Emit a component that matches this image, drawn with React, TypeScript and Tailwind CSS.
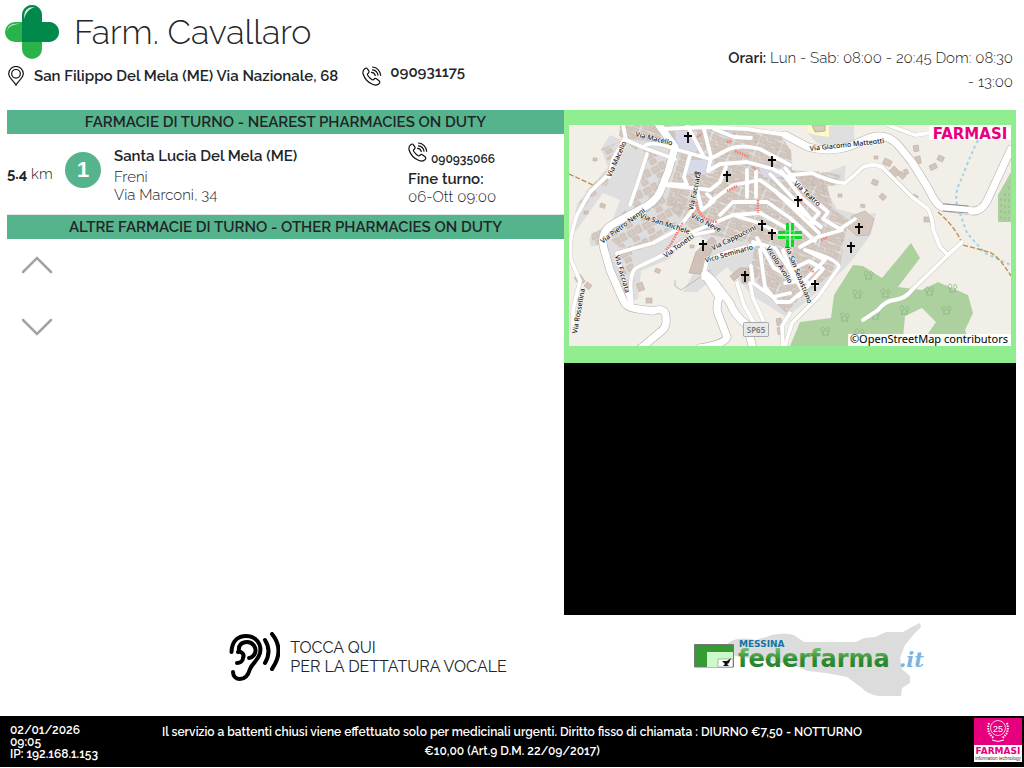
import type { ReactNode } from "react";

function PharmacyCross() {
  return (
    <svg viewBox="0 0 54 54" className="size-[54px] shrink-0" aria-hidden="true">
      <rect x="17" y="0" width="20" height="54" rx="10" fill="#2ab34b" />
      <rect x="0" y="17" width="54" height="20" rx="10" fill="#2ab34b" />
      <path d="M17 37V10a10 10 0 0 1 20 0v7h7a10 10 0 0 1 0 20z" fill="#00894a" />
      <path d="M19 14c0-9 3-12 11-12-6 2-9 5-11 12z" fill="#fff" opacity=".85" />
      <path d="M2 26c1-5 4-8 13-7-7 0-11 2-13 7z" fill="#fff" opacity=".85" />
    </svg>
  );
}

function PinIcon() {
  return (
    <svg viewBox="0 0 16 20" className="h-5 w-4 shrink-0" fill="none" stroke="#111" strokeWidth="1.2" aria-hidden="true">
      <path d="M8 19C6 15 .7 12 .7 7.800a7.300 7.300 0 0 1 14.600 0C15.300 12 10 15 8 19z" />
      <circle cx="8" cy="7.800" r="4.300" />
    </svg>
  );
}

function PhoneIcon() {
  return (
    <svg viewBox="0 0 20 20" className="size-5 shrink-0" fill="none" stroke="#111" strokeWidth="1.200" strokeLinecap="round" strokeLinejoin="round" aria-hidden="true">
      <path d="M3 2.500C1 4 .5 6 1.200 8.300c1.500 4.500 5 8.500 9.800 10.200 2.500.9 4.800.6 6.300-1.200.7-.9.500-2-.3-2.600l-2.600-1.900c-.8-.5-1.700-.4-2.300.3-.7.900-1.400 1-2.400.4-1.500-1-3-2.500-4-4.200-.5-.9-.3-1.500.5-2.100.9-.6 1.100-1.500.6-2.400L5.300 2.600C4.800 1.800 3.800 1.800 3 2.500z" />
      <path d="M10.500 1c4.400.3 7.800 3.800 8.200 8.300M10.500 3.900c2.800.3 5 2.400 5.500 5.300M9.500 6.300c2 .2 3.300 1.400 3.800 3.200" />
    </svg>
  );
}

function EarIcon() {
  return (
    <svg viewBox="0 0 51 50" className="h-[50px] w-[51px] shrink-0" fill="none" stroke="#000" strokeWidth="4" strokeLinecap="round" aria-hidden="true">
      <path d="M2.500 20C3 8 10 4 17 4c10 0 16 8 14 17-2 8-7 9-10 16-2 7-5 10-10 10-4 0-7-3-7-7" />
      <path d="M10 19c-1-6 3-9 8-9 6 0 10 6 8 11-1 3-4 5-6 5" />
      <path d="M9 20c3-1 7 2 5 6 0 3-3 5-6 5" />
      <path d="M36 8q7 11 0 23M43 2q13 16 0 35" />
    </svg>
  );
}

const casedRoads = [
  "M216 10 239 22 Q259 28 279 22L300 13Q317 7 329 20L343 37 359 63Q367 80 373 82L403 86Q412 87 418 76L442 24",
  "M90 0 106 22 99 47 91 67Q86 78 70 85L46 98Q30 106 35 124L41 145 54 175Q57 183 69 184L84 186Q98 181 97 195 98 203 90 208L72 223",
  "M136 149Q143 153 151 165L161 178Q165 190 178 200L184 224",
  "M138 153 150 172Q146 184 150 191L158 212Q156 219 131 223",
];

const streets = [
  "M54 0 57 15 78 24 106 34",
  "M41 48 21 67 8 90Q-2 120 2 135L11 156 4 185 4 207",
  "M56 13 44 34 40 52",
  "M78 29 70 54 61 80",
  "M74 22Q80 16 97 21L106 24 141 34 160 24Q172 19 191 24L221 40",
  "M134 0 142 32 139 46",
  "M118 0 134 30",
  "M139 46 151 39 178 37 204 44 226 56",
  "M121 30 115 52 118 60 97 59 M95 60 124 63 141 65 151 57 157 42",
  "M94 4 138 2 178 4 218 10",
  "M145 4 165 12 182 13",
  "M128 65 133 85 145 76 138 69",
  "M223 50 243 48Q265 58 276 58 286 50 294 42 304 38 313 42L343 72 359 84Q364 94 364 104L371 122 379 130",
  "M393 117 379 130 343 165Q336 174 325 175 316 176 309 185L294 195",
  "M319 0 346 10 360 8",
  "M63 180Q61 160 62 155C63 147 65 143 71 141L94 130 124 110 144 106",
  "M48 128 84 118 108 105 125 83 M48 128 54 155 63 183",
  "M134 153 138 135 158 127 188 119",
  "M168 158 175 180 186 200 M181 158 184 173 194 195",
  "M141 77 164 60 191 55 221 77 252 102",
  "M151 90 164 77 198 77 221 93 246 116",
  "M164 90 191 88 225 107",
  "M121 108 145 98 164 90 190 98 210 108",
  "M178 45 178 72 M187 46 187 72",
  "M216 43 236 67 259 87 254 94 271 104 286 94",
  "M212 46 232 72 250 88 242 97",
  "M201 49 226 75 245 98",
  "M205 65 225 84 250 108",
  "M184 117 206 123 217 139 232 163",
  "M188 113 205 143 221 152 248 160",
  "M191 125 196 162 208 177 221 177 234 166",
  "M182 141 184 158 204 172 221 168",
  "M214 125 221 143 236 165",
  "M231 122 249 112 273 105",
  "M236 125Q269 134 270 142L249 172 223 198 216 221",
  "M216 158 236 155 256 135 239 126",
  "M221 145 240 136 254 144 230 171",
  "M221 188 213 201 214 221",
];

const churches: [number, number][] = [
  [119, 12], [203, 36], [158, 51], [229, 76], [193, 100], [203, 109],
  [134, 120], [176, 151], [290, 103], [282, 122], [246, 160],
];

const trees: [number, number][] = [
  [299, 150], [288, 169], [316, 168], [360, 166], [383, 163], [275, 192],
  [306, 190], [335, 185], [377, 185], [256, 206], [290, 208],
];

const labels: [string, number, number, number][] = [
  ["Via Macello", 85, 14, 14],
  ["Via Macello", 48, 34, -66],
  ["Via Giacomo Matteotti", 278, 20, -6],
  ["Via Pietro Nenni", 54, 101, -37],
  ["Via San Michele", 96, 99, 18],
  ["Via Facciata", 126, 66, -78],
  ["Vico Neve", 137, 98, 28],
  ["Via Tonetti", 110, 121, -36],
  ["Via Cappuccini", 165, 113, -26],
  ["Vico Seminario", 160, 129, -16],
  ["Vicolo Avolio", 210, 140, 57],
  ["Via San Sebastiano", 229, 149, 68],
  ["Via Facciata", 53, 149, 74],
  ["Via Rossellina", 10, 186, -80],
  ["Via Teatro", 238, 69, 42],
];

const houses: [number, number, number, number][] = [
  [24, 33, 4, 0], [32, 78, 5, 20], [15, 86, 4, 0], [11, 149, 9, 55], [18, 157, 6, 35],
  [73, 157, 8, 70], [77, 173, 6, 0], [87, 143, 5, 20], [121, 120, 4, 0],
  [305, 31, 4, 0], [316, 33, 8, 25], [325, 41, 9, 45], [332, 46, 7, 45], [304, 54, 6, 20],
  [313, 68, 6, 40], [269, 69, 4, 0], [292, 79, 4, 10], [349, 20, 6, 80], [351, 31, 7, 80],
  [360, 41, 7, -25], [370, 30, 6, 25], [338, 44, 5, 70], [355, 92, 6, 0], [345, 69, 5, 30],
  [213, 202, 7, 80], [212, 193, 7, 80],
];

function TownMap() {
  return (
    <svg viewBox="0 0 442 221" className="block w-full" role="img" aria-label="Mappa di Santa Lucia Del Mela">
      <defs>
        <pattern id="houses" width="23" height="21" patternUnits="userSpaceOnUse" patternTransform="rotate(20)">
          <g fill="#d6c9bf" stroke="#c0afa4" strokeWidth=".6">
            <path d="M1 1h6v5H1zM8 2h5v7H8zM14 1h7v4h-7zM1 8h5v6H1zM14 7h4v6h-4zM19 8h3v7h-3zM7 11h6v4H7zM1 16h8v4H1zM10 16h4v4h-4zM15 15h6v5h-6z" />
          </g>
        </pattern>
        <pattern id="yards" width="17" height="15" patternUnits="userSpaceOnUse" patternTransform="rotate(-28)">
          <path d="M1 2h7v6H1zM10 1h5v7h-5zM3 10h6v4H3z" fill="#d6c9bf" stroke="#c0afa4" strokeWidth=".6" />
        </pattern>
      </defs>
      <rect width="442" height="221" fill="#f2efe9" />
      <path d="M265 0H285V17L272 24 248 18 237 6z" fill="#e0dfdf" />
      <path d="M238 0H260V12L246 10 238 7z" fill="#fbf9c4" />
      <path d="M243 0H256V6L246 7z" fill="#d6c9bf" stroke="#c0afa4" />
      <path d="M51 0H137L210 9 222 25 223 45 256 48 277 40 275 60 254 59 268 84 292 90 307 88 302 109 284 134 274 145 228 184 217 192 184 171 158 142 128 167 114 167 142 117 122 107 100 134 72 146 69 174 57 178 35 119 22 122 20 113 44 94 51 75 34 68 7 106 3 105 8 79 39 42 32 24 41 10 53 15z" fill="#dfdede" />
      <path d="M51 0H137L210 9 222 25 223 45 254 48 258 60 264 84 280 95 276 110 271 142 228 176 217 188 193 165 182 145 186 119 125 106 97 80 112 22 50 12z" fill="url(#houses)" />
      <path d="M52 14 102 30 91 65 70 82 45 98 66 73 75 31zM32 24 52 16 45 32 38 36zM24 59 36 47 40 58 22 74 8 91 12 73zM46 99 91 70 118 82 103 103 70 125 50 122 38 111zM48 126 63 125 66 170 55 170zM22 108 34 104 32 120 24 121z" fill="url(#yards)" />
      <path d="M225 48 250 46 272 50 268 60 256 62 258 78z" fill="url(#houses)" />
      <path d="M283 91 296 86 305 94 300 110 288 111 279 103z" fill="#d6c9bf" stroke="#c0afa4" strokeWidth=".7" />
      <path d="M106 6H128V27H108z M120 35H145V49H116z M190 43H220V52H195z" fill="#d8d9e8" />
      <path d="M127 127 143 112 147 116 132 149 120 148z M161 151 171 143H180V158H173V148L165 156z" fill="#d0c2b8" stroke="#b9a99c" strokeWidth=".7" />
      <path d="M106 155V161L112 165 142 145" fill="none" stroke="#aaa" strokeWidth=".7" />
      {houses.map(([x, y, s, r]) => (
        <rect key={`${x}-${y}`} x={x} y={y} width={s} height={Math.ceil(s * 0.7)} fill="#d3c5bb" stroke="#bfafa4" strokeWidth=".6" transform={`rotate(${r} ${x} ${y})`} />
      ))}
      <path fillRule="evenodd" fill="#add19e" d="M221 221 231 197 262 193 265 170 284 140 294 141 313 153 342 118 351 133 329 162 353 165 369 157 399 170 404 188 396 205 402 221zM336 191 353 183 367 197 356 213H334z" />
      <path d="M429 97V70L442 47V97z" fill="#add19e" />
      <path d="M432 73v22M436 68v27M440 62v33" stroke="#8fbd82" strokeDasharray="3 3" />
      {trees.map(([x, y]) => (
        <path key={`${x}-${y}`} transform={`translate(${x} ${y})`} d="M-2 4V0M-2 1c-3-1-2-5 0-5s3 4 0 5M3 4V0M3 1C1 0 2-3 3-4c2 1 3 4 0 5M-3 4h7" fill="none" stroke="#8cb584" strokeWidth=".8" />
      ))}
      <path d="M409 15Q398 38 393 53 385 67 388 80L398 108 416 128 442 140" fill="none" stroke="#a1d3e4" strokeWidth="2" strokeDasharray="3 3" />
      <path d="M369 87Q381 97 389 110L394 120 420 127Q429 130 442 151M0 49 24 60" fill="none" stroke="#b98d3c" strokeWidth="1.300" strokeDasharray="5 2" />
      <g fill="none" strokeLinecap="round" strokeLinejoin="round">
        {streets.map((d) => <path key={d} d={d} stroke="#c9c7c5" strokeWidth="4.600" />)}
        {casedRoads.map((d) => <path key={d} d={d} stroke="#b5b3b0" strokeWidth="8.600" />)}
        {streets.map((d) => <path key={d} d={d} stroke="#fff" strokeWidth="3.800" />)}
        {casedRoads.map((d) => <path key={d} d={d} stroke="#fff" strokeWidth="7.400" />)}
        <path d="M374 79 399 81M374 86 399 88" stroke="#777" strokeWidth=".8" />
        <path d="M127 77Q130 96 148 97M166 26 180 32M128 12 133 9M158 17 163 16M189 75V88M158 66 168 61M97 125 102 119 114 97M184 42 187 45M240 142 245 148M252 115 259 112M231 77 234 74" stroke="#fa7a70" strokeWidth="2.500" strokeDasharray="1.500 1" strokeLinecap="butt" />
      </g>
      <g fontFamily="Noto Sans, sans-serif" fontSize="7" fontWeight="500" textAnchor="middle" fill="#111" stroke="#fff" strokeWidth="1" paintOrder="stroke">
        {labels.map(([name, x, y, angle]) => (
          <text key={`${x}-${y}`} x={x} y={y + 2} transform={`rotate(${angle} ${x} ${y})`}>{name}</text>
        ))}
      </g>
      {churches.map(([x, y]) => (
        <path key={`${x}-${y}`} transform={`translate(${x} ${y})`} d="M0-5V6M-4-1H4" stroke="#000" strokeWidth="1.800" />
      ))}
      <path d="M127 46V52M125 48H130" stroke="#444" />
      <path d="M217 98h8v8h8v8h-8v8h-8v-8h-8v-8h8z" fill="#12d52b" />
      <path d="M221 98v24M209 110h24" stroke="#fff" strokeWidth="1.500" />
      <path d="M217 106h8v8h-8z" fill="none" stroke="#96f2a0" strokeWidth=".8" />
      <rect x="174.500" y="197.500" width="25" height="14" rx="1" fill="#e9e9e9" stroke="#aaa" />
      <text x="187" y="208" fontFamily="Noto Sans, sans-serif" fontSize="8" fontWeight="600" fill="#777" textAnchor="middle" className="lining-nums">SP65</text>
      <rect x="360" y="0" width="82" height="15" fill="#fff" opacity=".85" />
      <text x="401" y="14" fontFamily="DejaVu Sans, sans-serif" fontSize="15" fontWeight="700" textAnchor="middle" fill="#e6007e">FARMASI</text>
      <rect x="279" y="209" width="163" height="12" fill="#fff" opacity=".9" />
      <text x="360" y="218" fontFamily="Noto Sans, sans-serif" fontSize="11" fontWeight="400" textAnchor="middle" fill="#000">©OpenStreetMap contributors</text>
    </svg>
  );
}

function FederfarmaLogo() {
  return (
    <svg viewBox="0 0 240 76" className="h-[76px] w-60" role="img" aria-label="Messina federfarma.it">
      <defs>
        <linearGradient id="leaf" x1="0" y1="0" x2="0" y2="1">
          <stop offset="0" stopColor="#84ce76" />
          <stop offset=".55" stopColor="#2c8b31" />
          <stop offset="1" stopColor="#287b2c" />
        </linearGradient>
      </defs>
      <path d="M34 22Q44 15 62 19L78 14Q91 11 100 14L110 21H162L170 17 181 16 192 11H209Q217 6 226 2L227 6 220 13 211 24 206 37 208 48 216 55V62L208 67 207 75H184Q173 73 168 67L153 56 132 52 114 50 96 43 60 38 36 34z" fill="#dcdcdc" />
      <path d="M.5 23.500h39V46H.500z" fill="#349b35" stroke="#777" />
      <path d="M13 31h26v15H13z" fill="#ccfacb" />
      <path d="M24 38h15v8H24z" fill="#fff" stroke="#777" strokeWidth=".5" />
      <path d="M28 40h5l4-3-2 5-2 1 2 2h-6l2-2z" fill="#111" />
      <text x="45" y="26" fontFamily="DejaVu Sans, sans-serif" fontSize="9" fontWeight="700" fill="#1474a8">MESSINA</text>
      <text x="44" y="46" fontFamily="DejaVu Sans, sans-serif" fontSize="24" fontWeight="700" fill="url(#leaf)">federfarma</text>
      <text x="205" y="46" fontFamily="DejaVu Serif, serif" fontSize="21" fontStyle="italic" fontWeight="700" fill="#7bb4df">.it</text>
    </svg>
  );
}

function FarmasiBadge() {
  return (
    <svg viewBox="0 0 96 88" className="h-11 w-12 shrink-0" role="img" aria-label="Farmasi information technology">
      <path d="M0 0h96v54H0z" fill="#e6007e" />
      <path d="M0 54h96v34H0z" fill="#fff" />
      <g fill="none" stroke="#fff">
        <circle cx="48" cy="20" r="15" strokeWidth="1.500" />
        <path d="M30 10Q24 30 40 40M66 10Q72 30 56 40" strokeWidth="4" strokeDasharray="3 2" />
        <path d="M36 44q12 6 24 0" strokeWidth="2" />
      </g>
      <text x="48" y="27" fontFamily="Liberation Sans, sans-serif" fontSize="18" fontWeight="400" textAnchor="middle" fill="#fff">25</text>
      <text x="48" y="72" fontFamily="DejaVu Sans, sans-serif" fontSize="18" fontWeight="700" textAnchor="middle" fill="#e6007e">FARMASI</text>
      <text x="48" y="84" fontFamily="Liberation Sans, sans-serif" fontSize="9" fontWeight="400" textAnchor="middle" fill="#333">information technology</text>
    </svg>
  );
}

function SectionTitle({ children }: { children: ReactNode }) {
  return <h2 className="bg-[#56b48c] text-center text-[15px] leading-6 font-semibold">{children}</h2>;
}

function ScrollButton({ label, d }: { label: string; d: string }) {
  return (
    <button type="button" aria-label={label} className="cursor-pointer">
      <svg viewBox="0 0 32 18" className="h-[18px] w-8" fill="none" stroke="#a3a3a3" strokeWidth="2.500" strokeLinecap="round">
        <path d={d} />
      </svg>
    </button>
  );
}

export default function App() {
  return (
    <div className="flex min-h-screen flex-col bg-white pb-px font-['Raleway','Lato',sans-serif] text-[15px] font-light text-[#212529] oldstyle-nums">
      <header className="flex items-start justify-between pt-[5px] pr-[11px] pb-4 pl-[5px]">
        <div>
          <div className="flex items-center gap-[15px]">
            <PharmacyCross />
            <h1 className="text-[34px] leading-[54px] font-light">Farm. Cavallaro</h1>
          </div>
          <div className="flex items-center gap-6 pt-[5px] pl-[3px] font-semibold">
            <p className="flex items-center gap-[10px] leading-6">
              <PinIcon />
              San Filippo Del Mela (ME) Via Nazionale, 68
            </p>
            <a href="tel:090931175" className="flex items-start gap-2 leading-3">
              <PhoneIcon />
              090931175
            </a>
          </div>
        </div>
        <p className="w-[290px] pt-[41px] text-right leading-6">
          <b className="font-semibold">Orari:</b> Lun - Sab: 08:00 - 20:45 Dom: 08:30 - 13:00
        </p>
      </header>

      <main className="grid grow grid-cols-[557fr_452fr] grid-rows-[auto_1fr] pr-2 pl-[7px]">
        <section>
          <SectionTitle>FARMACIE DI TURNO - NEAREST PHARMACIES ON DUTY</SectionTitle>
          <article className="flex items-start border-b border-[#dee2e6] pt-2 pb-2">
            <p className="w-[58px] pt-5 leading-6"><b className="font-bold">5.4</b> km</p>
            <span className="mt-[10px] flex size-9 items-center justify-center rounded-full bg-[#56b48c] font-['Liberation_Sans',sans-serif] text-[22px] leading-none font-bold text-white">1</span>
            <div className="grow pl-[13px] leading-[18px]">
              <h3 className="pt-[5px] pb-[3px] font-semibold">Santa Lucia Del Mela (ME)</h3>
              <p>Freni</p>
              <p>Via Marconi, 34</p>
            </div>
            <div className="w-[156px] leading-[18px]">
              <a href="tel:090935066" className="flex items-start gap-[3px] text-[12px] font-semibold">
                <PhoneIcon />
                <span className="pt-2">090935066</span>
              </a>
              <p className="pt-[2px] font-semibold">Fine turno:</p>
              <p>06-Ott 09:00</p>
            </div>
          </article>
          <SectionTitle>ALTRE FARMACIE DI TURNO - OTHER PHARMACIES ON DUTY</SectionTitle>
          <nav className="flex flex-col items-start gap-11 pt-[17px] pl-[14px]">
            <ScrollButton label="Scorri su" d="M2 16 16 2 30 16" />
            <ScrollButton label="Scorri giù" d="M2 2 16 16 30 2" />
          </nav>
        </section>
        <aside>
          <div className="bg-[#90ee90] px-[5px] pt-[15px] pb-[17px]">
            <TownMap />
          </div>
          <div className="h-[252px] bg-black" />
        </aside>

        <div className="flex items-start justify-center pt-[17px] pr-[3px] pb-8 pl-[168px]">
          <button type="button" className="flex cursor-pointer items-center gap-[10px] text-left text-[16px] leading-[19px] font-normal">
            <EarIcon />
            <span>TOCCA QUI<br />PER LA DETTATURA VOCALE</span>
          </button>
        </div>
        <div className="flex items-start justify-center pt-[6px] pl-12">
          <FederfarmaLogo />
        </div>
      </main>

      <footer className="flex items-start justify-between bg-black pr-[2px] pb-[5px] pl-[10px] text-[12px] font-semibold text-white">
        <p className="w-28 pt-2 leading-3">02/01/2026<br />09:05<br />IP: 192.168.1.153</p>
        <p className="max-w-[720px] pt-[7px] text-center leading-[19px]">
          Il servizio a battenti chiusi viene effettuato solo per medicinali urgenti. Diritto fisso di chiamata : DIURNO €7,50 - NOTTURNO €10,00 (Art.9 D.M. 22/09/2017)
        </p>
        <div className="flex w-[120px] justify-end pt-[2px]">
          <FarmasiBadge />
        </div>
      </footer>
    </div>
  );
}
